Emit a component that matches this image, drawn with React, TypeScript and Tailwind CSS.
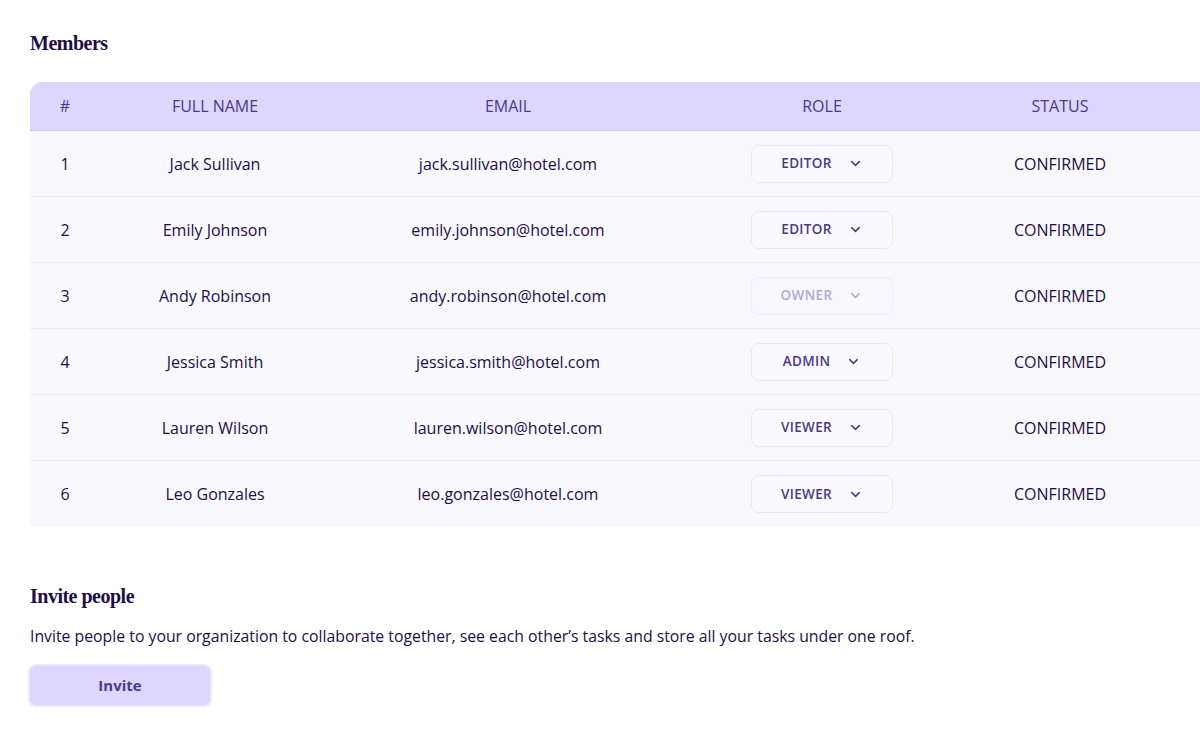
import { ChevronDown } from "lucide-react";

type Member = { name: string; email: string; role: string; locked?: boolean };

const members: Member[] = [
  { name: "Jack Sullivan", email: "jack.sullivan@hotel.com", role: "EDITOR" },
  { name: "Emily Johnson", email: "emily.johnson@hotel.com", role: "EDITOR" },
  { name: "Andy Robinson", email: "andy.robinson@hotel.com", role: "OWNER", locked: true },
  { name: "Jessica Smith", email: "jessica.smith@hotel.com", role: "ADMIN" },
  { name: "Lauren Wilson", email: "lauren.wilson@hotel.com", role: "VIEWER" },
  { name: "Leo Gonzales", email: "leo.gonzales@hotel.com", role: "VIEWER" },
];

const cols = "grid grid-cols-[70px_230px_356px_272px_204px_100px]";

function RoleSelect({ role, locked }: { role: string; locked?: boolean }) {
  return (
    <div
      className={
        "flex h-[38px] w-[142px] items-center justify-center gap-[16px] rounded-lg border text-[13.5px] font-semibold tracking-wide " +
        (locked
          ? "border-dotted border-[#e6e3f0] font-medium text-[#b3a9cf]"
          : "border-[#ebe8f5] bg-[#faf9ff] text-[#4b3a86]")
      }
    >
      <span>{role}</span>
      <ChevronDown size={15} strokeWidth={2.4} />
    </div>
  );
}

export default function App() {
  return (
    <main className="min-h-screen w-full overflow-hidden bg-white font-['Open_Sans',_sans-serif] text-[#1d0f45]">
      <div className="pl-[30px] pt-[28px]">
        <h2 className="font-['Liberation_Serif',_serif] text-[20px] font-bold tracking-tight text-[#1d0f45]">
          Members
        </h2>

        <div className="mt-[24px] w-[1232px] overflow-hidden rounded-tl-xl rounded-bl-md">
          <div className={cols + " h-[49px] items-center border-b border-dotted border-[#c8bdf0] bg-[#ddd6fe] text-[16px] font-medium text-[#4b3a86]"}>
            <div className="text-center">#</div>
            <div className="text-center">FULL NAME</div>
            <div className="text-center">EMAIL</div>
            <div className="text-center">ROLE</div>
            <div className="text-center">STATUS</div>
            <div />
          </div>
          {members.map((m, i) => (
            <div
              key={m.email}
              className={cols + " h-[66px] items-center bg-[#f9f8fe] text-[16px] " + (i < members.length - 1 ? "border-b border-[#ecebf3]" : "")}
            >
              <div className="text-center">{i + 1}</div>
              <div className="text-center">{m.name}</div>
              <div className="text-center">{m.email}</div>
              <div className="flex justify-center">
                <RoleSelect role={m.role} locked={m.locked} />
              </div>
              <div className="text-center">CONFIRMED</div>
              <div />
            </div>
          ))}
        </div>

        <h2 className="mt-[54px] font-['Liberation_Serif',_serif] text-[20px] font-bold tracking-tight text-[#1d0f45]">
          Invite people
        </h2>
        <p className="mt-[14px] text-[15.8px] text-[#1d0f45]">
          Invite people to your organization to collaborate together, see each other’s tasks and store all your tasks under one roof.
        </p>
        <button className="-ml-[2px] mt-[15px] h-[43px] w-[184px] rounded-lg border-2 border-[#ece7ff] bg-[#ddd6fe] text-[15px] font-bold text-[#4b3a86]">
          Invite
        </button>
      </div>
    </main>
  );
}
